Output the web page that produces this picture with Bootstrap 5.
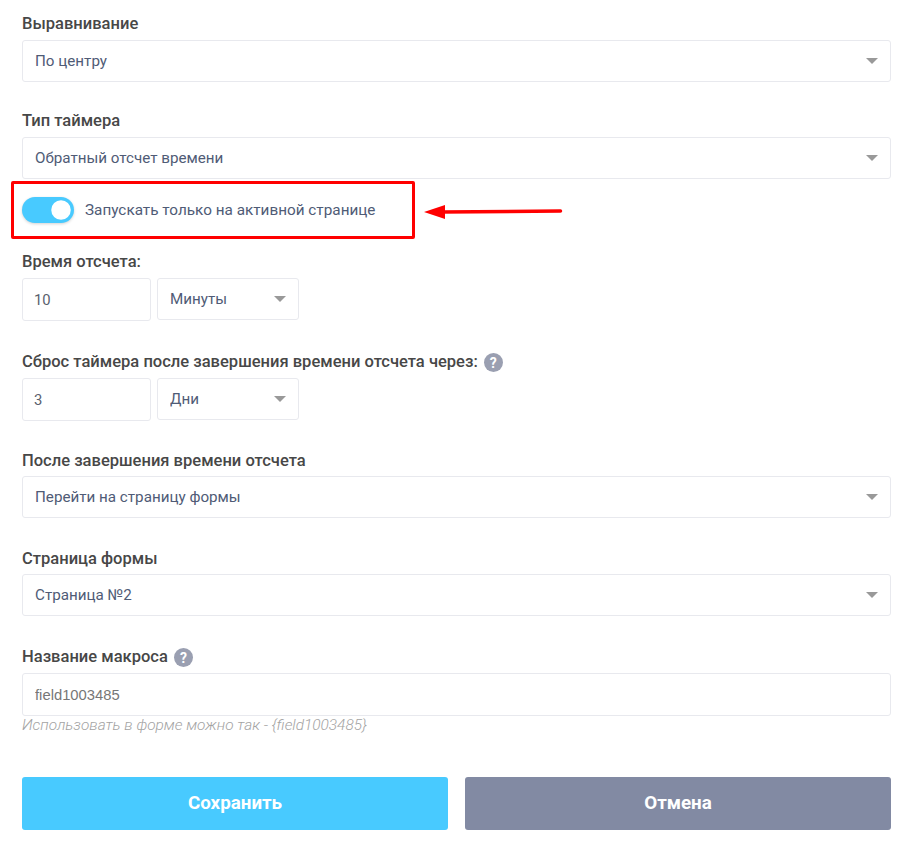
<!DOCTYPE html>
<html lang="ru">

<head>
  <meta charset="UTF-8">
  <title>Настройки таймера</title>
  <meta name="viewport" content="width=device-width, initial-scale=1">
  <link href="https://cdn.jsdelivr.net/npm/bootstrap@5.3.0/dist/css/bootstrap.min.css" rel="stylesheet">
  <style>
    body { font-family: Roboto, "Liberation Sans", sans-serif; background: #fff; }
    .timer-form { position: relative; padding: 12px 19px 0 22px; }
    .field-block { margin-bottom: 27px; }
    .field-block.gap-mid { margin-bottom: 28px; }
    .field-block.gap-wide { margin-bottom: 29px; }
    .field-title { display: flex; align-items: center; gap: 6px; height: 24px; margin-bottom: 4px; padding-top: 1px; font-size: 16.55px; font-weight: 500; color: #474747; }
    .field-title.title-tight { margin-bottom: 3px; }
    .timer-form .form-select,
    .timer-form .form-control { height: 42px; padding: 0 12px; font-size: 15.2px; color: #4f5b76; border: 1px solid #e8e9ee; border-radius: 3px; box-shadow: none; }
    .timer-form .form-select {
      background-size: 12px 6px;
      background-position: right 12px center;
      background-image: url("data:image/svg+xml,%3Csvg xmlns='http://www.w3.org/2000/svg' viewBox='0 0 12 6'%3E%3Cpath fill='%23999' d='M0 0h12L6 6z'/%3E%3C/svg%3E");
    }
    .timer-pair { display: flex; gap: 6px; }
    .timer-form .num-input { flex: 0 0 129px; width: 129px; height: 43px; padding-left: 11px; font-size: 14.8px; color: #5a5f6e; }
    .timer-form .unit-select { flex: 0 0 142px; width: 142px; }
    .help-dot { display: inline-flex; align-items: center; justify-content: center; width: 19px; height: 19px; border-radius: 50%; background: #9a9fb1; color: #fff; font-size: 14px; font-weight: 700; line-height: 1; }
    .toggle-row { display: flex; align-items: center; gap: 11px; height: 26px; margin: 18px 0 27px; padding: 0; }
    .toggle-row .form-check-input { width: 52px; height: 26px; margin: 0; float: none; border: 0; background-color: #48caff; box-shadow: 0 1px 3px rgba(0, 0, 0, .18); }
    .toggle-row .form-check-label { font-size: 15.3px; color: #4f5b76; }
    .timer-form .macro-input { height: 43px; color: #777; font-family: "Liberation Sans", sans-serif; font-size: 14.8px; }
    .macro-hint { font-size: 15.4px; font-style: italic; font-weight: 300; line-height: 18px; color: #a3a3a3; }
    .form-actions { display: flex; gap: 17px; margin-top: 43px; }
    .form-actions .btn { flex: 1 1 0; height: 53px; border: 0; border-radius: 3px; font-size: 18.8px; font-weight: 700; color: #fff; }
    .btn-save { background: #48caff; }
    .btn-cancel { background: #828aa3; }
    .callout-box { position: absolute; left: 11px; top: 181px; width: 404px; height: 58px; border: 3px solid #f00; border-radius: 2px; pointer-events: none; }
    .callout-arrow { position: absolute; left: 420px; top: 198px; width: 146px; height: 26px; }
  </style>
</head>

<body>
  <form class="timer-form">
    <div class="field-block">
      <label class="field-title">Выравнивание</label>
      <select class="form-select"><option>По центру</option></select>
    </div>

    <div>
      <label class="field-title">Тип таймера</label>
      <select class="form-select"><option>Обратный отсчет времени</option></select>
    </div>

    <div class="form-check form-switch toggle-row">
      <input class="form-check-input" type="checkbox" role="switch" id="onlyActive" checked>
      <label class="form-check-label" for="onlyActive">Запускать только на активной странице</label>
    </div>

    <div class="field-block gap-wide">
      <label class="field-title">Время отсчета:</label>
      <div class="timer-pair">
        <input type="text" class="form-control num-input" value="10">
        <select class="form-select unit-select"><option>Минуты</option></select>
      </div>
    </div>

    <div class="field-block gap-mid">
      <label class="field-title">Сброс таймера после завершения времени отсчета через: <span class="help-dot">?</span></label>
      <div class="timer-pair">
        <input type="text" class="form-control num-input" value="3">
        <select class="form-select unit-select"><option>Дни</option></select>
      </div>
    </div>

    <div class="field-block gap-wide">
      <label class="field-title title-tight">После завершения времени отсчета</label>
      <select class="form-select"><option>Перейти на страницу формы</option></select>
    </div>

    <div class="field-block gap-wide">
      <label class="field-title title-tight">Страница формы</label>
      <select class="form-select"><option>Страница №2</option></select>
    </div>

    <div>
      <label class="field-title">Название макроса <span class="help-dot">?</span></label>
      <input type="text" class="form-control macro-input" value="field1003485">
      <div class="macro-hint">Использовать в форме можно так - {field1003485}</div>
    </div>

    <div class="form-actions">
      <button type="button" class="btn btn-save">Сохранить</button>
      <button type="button" class="btn btn-cancel">Отмена</button>
    </div>

    <div class="callout-box"></div>
    <svg class="callout-arrow" viewBox="0 0 146 26">
      <path d="M140.5 13 L22 14" stroke="#f00" stroke-width="3.5" stroke-linecap="round" fill="none"/>
      <path d="M4 14 L25 7 L25 21 Z" fill="#f00"/>
    </svg>
  </form>

  <script src="https://cdn.jsdelivr.net/npm/bootstrap@5.3.0/dist/js/bootstrap.bundle.min.js"></script>
</body>
</html>
